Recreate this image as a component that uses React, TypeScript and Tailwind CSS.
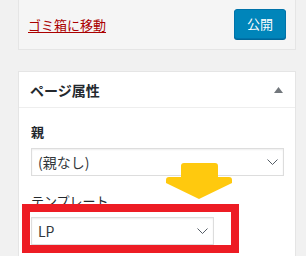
const font = { fontFamily: '"Noto Sans CJK JP", "Noto Sans", sans-serif' }

function SelectBox({ label, width }: { label: string; width: string }) {
  return (
    <div
      className={`${width} h-[28px] flex items-center justify-between pl-[6px] pr-[5px] bg-white border border-[#dddddd] shadow-[inset_0_1px_2px_rgba(0,0,0,0.07)]`}
    >
      <span className="text-[14px] leading-[20px] text-[#32373c]">{label}</span>
      <svg width="11" height="6" viewBox="0 0 11 6" className="text-[#555d66]">
        <polyline points="0.5,0.5 5.5,5.5 10.5,0.5" fill="none" stroke="currentColor" strokeWidth="1" />
      </svg>
    </div>
  )
}

export default function App() {
  return (
    <div className="relative w-[306px] h-[256px] overflow-hidden bg-[#f1f1f1] text-[#23282d]" style={font}>
      {/* Publish box bottom */}
      <div className="ml-[18px] w-[278px] h-[50px] flex items-center justify-between pl-[9px] pr-[9px] bg-[#f5f5f5] border-x border-b border-[#e5e5e5]">
        <a className="text-[13px] leading-[18px] text-[#a00] underline underline-offset-[2px]">ゴミ箱に移動</a>
        <button className="w-[52px] h-[30px] mb-[1px] rounded-[3px] bg-[#0085ba] border border-[#0073aa] shadow-[0_1px_0_#006799] text-white text-[13px] leading-[20px]">
          公開
        </button>
      </div>

      {/* Page attributes */}
      <div className="ml-[18px] mt-[21px] w-[278px] h-[200px] bg-white border border-[#e5e5e5]">
        <div className="h-[36px] flex items-center justify-between pl-[11px] pr-[12px] border-b border-[#eeeeee]">
          <h2 className="text-[14px] leading-[20px] font-semibold">ページ属性</h2>
          <svg width="9" height="6" viewBox="0 0 9 6">
            <polygon points="4.5,0 9,6 0,6" fill="#72777c" />
          </svg>
        </div>
        <div className="pt-[14px] pl-[12px]">
          <p className="text-[13px] leading-[20px] font-semibold mb-[6px]">親</p>
          <SelectBox label="(親なし)" width="w-[253px]" />
          <p className="text-[13px] leading-[20px] mt-[15px] mb-[6px]">テンプレート</p>
          <SelectBox label="LP" width="w-[183px]" />
        </div>
      </div>

      {/* Yellow arrow */}
      <svg className="absolute left-[166px] top-[162px]" width="67" height="38" viewBox="0 0 67 38">
        <path
          d="M15,4 Q15,1 18,1 L49,1 Q52,1 52,4 L52,15 L63,15 Q66,15 66,18 L66,21 L33,37 L0,21 L0,18 Q0,15 3,15 L15,15 Z"
          fill="#ffc90e"
        />
      </svg>

      {/* Red highlight */}
      <div className="absolute left-[22px] top-[204px] w-[217px] h-[49px] border-[8px] border-[#ed1c24]" />
    </div>
  )
}
